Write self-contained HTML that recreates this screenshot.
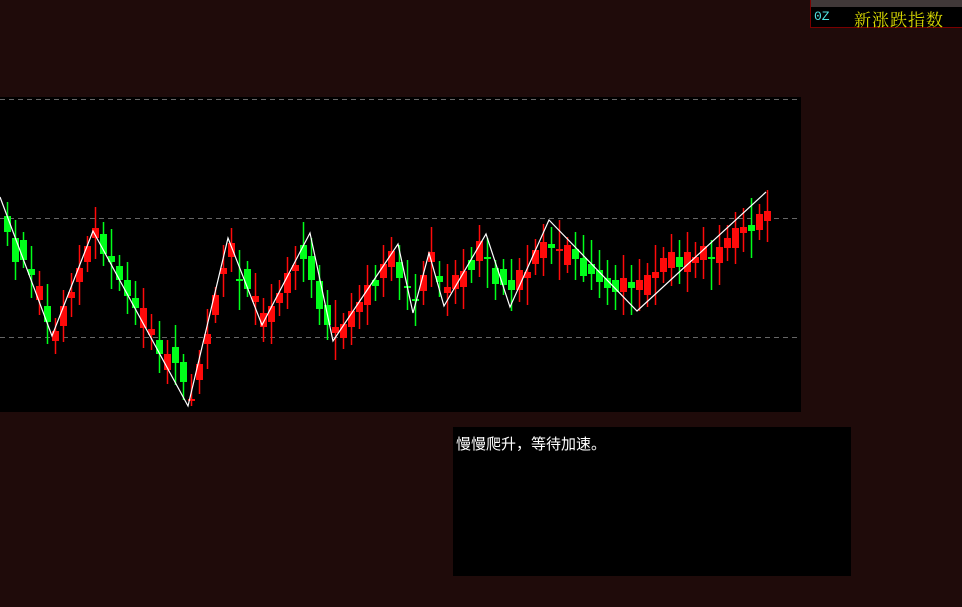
<!DOCTYPE html>
<html><head><meta charset="utf-8"><style>
html,body{margin:0;padding:0;}
body{width:962px;height:607px;background:#1f0b0a;position:relative;overflow:hidden;font-family:"Liberation Sans","Noto Sans CJK SC",sans-serif;}
#chart{position:absolute;left:0;top:97px;width:801px;height:315px;background:#000;}
#lbl{position:absolute;left:810px;top:0;width:151px;height:27px;background:#000;border:1px solid #7a0000;border-top:none;}
#lbl .bar{position:absolute;left:0;top:0;width:151px;height:7px;background:#403838;}
#lbl .oz{position:absolute;left:3px;top:9px;color:#4fe0e0;font-size:13px;font-family:"Liberation Mono",monospace;}
#lbl .t{position:absolute;left:43px;top:6px;color:#d8d800;font-size:17px;font-family:"Liberation Serif","Noto Serif CJK SC",serif;letter-spacing:1px;}
#box{position:absolute;left:453px;top:427px;width:398px;height:149px;background:#000;}
#box span{position:absolute;left:3px;top:6px;color:#fff;font-size:15px;font-family:"Liberation Sans","Noto Sans CJK SC",sans-serif;}
</style></head><body>
<div id="chart"><svg width="801" height="315" viewBox="0 97 801 315" xmlns="http://www.w3.org/2000/svg">
<line x1="0" y1="99.5" x2="801" y2="99.5" stroke="#666" stroke-dasharray="5,4"/>
<line x1="0" y1="218.5" x2="801" y2="218.5" stroke="#666" stroke-dasharray="5,4"/>
<line x1="0" y1="337.5" x2="801" y2="337.5" stroke="#666" stroke-dasharray="5,4"/>
<path stroke="#ff0a0a" stroke-width="1.5" fill="none" d="M39.5 271V315M55.5 318V354M63.5 290V342M71.5 273V317M79.5 245V305M87.5 236V272M95.5 207V259M143.5 288V348M151.5 314V350M167.5 340V384M191.5 374V406M199.5 350V394M207.5 309V369M215.5 287V323M223.5 245V297M231.5 228V272M255.5 273V325M263.5 298V342M271.5 284V344M279.5 280V316M287.5 257V309M295.5 246V290M335.5 300V360M343.5 313V349M351.5 293V345M359.5 285V329M367.5 265V325M383.5 245V297M391.5 237V281M423.5 261V305M431.5 227V287M447.5 264V316M455.5 260V304M463.5 249V309M479.5 225V277M519.5 258V302M527.5 245V305M535.5 239V275M543.5 224V276M559.5 220V280M567.5 237V273M623.5 255V315M639.5 259V311M647.5 263V307M655.5 245V305M663.5 247V283M671.5 234V286M687.5 232V292M695.5 242V278M703.5 227V279M719.5 225V285M727.5 225V261M735.5 212V264M743.5 208V252M759.5 204V240M767.5 190V242"/>
<path fill="#ff0a0a" d="M36 286h7v14h-7zM52 331h7v10h-7zM60 306h7v20h-7zM68 292h7v6h-7zM76 268h7v14h-7zM84 246h7v16h-7zM92 228h7v10h-7zM140 308h7v20h-7zM148 329h7v6h-7zM164 354h7v16h-7zM188 399h7v2h-7zM196 364h7v16h-7zM204 334h7v10h-7zM212 295h7v20h-7zM220 268h7v6h-7zM228 243h7v14h-7zM252 296h7v6h-7zM260 313h7v14h-7zM268 306h7v16h-7zM276 293h7v10h-7zM284 273h7v20h-7zM292 265h7v6h-7zM332 327h7v6h-7zM340 324h7v14h-7zM348 311h7v16h-7zM356 302h7v10h-7zM364 285h7v20h-7zM380 264h7v14h-7zM388 251h7v16h-7zM420 275h7v16h-7zM428 252h7v10h-7zM444 287h7v6h-7zM452 275h7v14h-7zM460 271h7v16h-7zM476 241h7v20h-7zM516 270h7v20h-7zM524 272h7v6h-7zM532 250h7v14h-7zM540 242h7v16h-7zM556 249h7v2h-7zM564 245h7v20h-7zM620 278h7v14h-7zM636 280h7v10h-7zM644 275h7v20h-7zM652 272h7v6h-7zM660 258h7v14h-7zM668 252h7v16h-7zM684 252h7v20h-7zM692 257h7v6h-7zM700 246h7v14h-7zM716 247h7v16h-7zM724 238h7v10h-7zM732 228h7v20h-7zM740 227h7v6h-7zM756 214h7v16h-7zM764 211h7v10h-7z"/>
<path stroke="#00ff1a" stroke-width="1.5" fill="none" d="M7.5 202V246M15.5 220V280M23.5 232V268M31.5 246V298M47.5 284V344M103.5 222V266M111.5 229V289M119.5 255V291M127.5 262V314M135.5 281V325M159.5 321V373M175.5 325V385M183.5 354V400M239.5 250V310M247.5 261V297M303.5 222V282M311.5 238V298M319.5 265V325M327.5 290V340M375.5 265V301M399.5 245V300M407.5 260V310M415.5 274V326M439.5 261V297M471.5 247V283M487.5 238V288M495.5 260V300M503.5 259V295M511.5 259V311M551.5 227V264M575.5 232V280M583.5 235V282M591.5 240V290M599.5 250V298M607.5 260V305M615.5 265V310M631.5 265V315M679.5 240V284M711.5 240V290M751.5 198V258"/>
<path fill="#00ff1a" d="M4 216h7v16h-7zM12 238h7v24h-7zM20 240h7v20h-7zM28 269h7v6h-7zM44 306h7v16h-7zM100 234h7v20h-7zM108 256h7v6h-7zM116 266h7v14h-7zM124 280h7v16h-7zM132 298h7v10h-7zM156 340h7v14h-7zM172 347h7v16h-7zM180 362h7v20h-7zM236 279h7v2h-7zM244 269h7v20h-7zM300 245h7v14h-7zM308 256h7v24h-7zM316 281h7v28h-7zM324 305h7v20h-7zM372 280h7v6h-7zM396 262h7v16h-7zM404 286h7v2h-7zM412 299h7v2h-7zM436 276h7v6h-7zM468 260h7v10h-7zM484 257h7v2h-7zM492 268h7v16h-7zM500 269h7v16h-7zM508 280h7v10h-7zM548 244h7v4h-7zM572 249h7v10h-7zM580 258h7v18h-7zM588 264h7v10h-7zM596 270h7v12h-7zM604 278h7v10h-7zM612 280h7v12h-7zM628 282h7v6h-7zM676 257h7v10h-7zM708 257h7v2h-7zM748 225h7v6h-7z"/>
<polyline fill="none" stroke="#fff" stroke-width="1.2" points="0,197 52,336 93,231 188,406 228,238 262,325 310,233 333,341 398,244 413,313 429,253 444,306 486,234 510,307 549,220 637,311 766,192"/>
</svg></div>
<div id="lbl"><div class="bar"></div><span class="oz">0Z</span><span class="t">新涨跌指数</span></div>
<div id="box"><span>慢慢爬升，等待加速。</span></div>
</body></html>
